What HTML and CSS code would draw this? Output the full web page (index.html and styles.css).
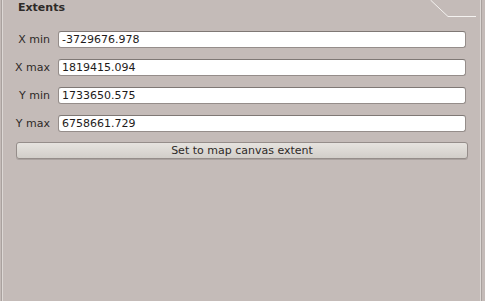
FILE: index.html
```html
<!DOCTYPE html>
<html lang="en">

<head>
    <meta charset="UTF-8">
    <title>Extents</title>
    <link rel="stylesheet" href="styles.css">
</head>

<body>
    <div id="panel">
        <svg class="tab-edge" width="485" height="20" viewBox="0 0 485 20">
            <path d="M430.5 0 L440 9 L448 16.5 L476 16.5" fill="none" stroke="#f4f2f0" stroke-width="1"/>
        </svg>
        <h2 class="group-title">Extents</h2>
        <div class="extent-grid">
            <label class="extent-label" for="xmin">X min</label>
            <input class="extent-input" type="text" id="xmin" value="-3729676.978">
            <label class="extent-label" for="xmax">X max</label>
            <input class="extent-input" type="text" id="xmax" value="1819415.094">
            <label class="extent-label" for="ymin">Y min</label>
            <input class="extent-input" type="text" id="ymin" value="1733650.575">
            <label class="extent-label" for="ymax">Y max</label>
            <input class="extent-input" type="text" id="ymax" value="6758661.729">
        </div>
        <button class="canvas-button" type="button">Set to map canvas extent</button>
    </div>
</body>

</html>
```

FILE: styles.css
```css
html,
body {
    height: 100%;
}

body {
    margin: 0;
    background-color: #c4bbb8;
    font-family: "DejaVu Sans", sans-serif;
    font-size: 11px;
    color: #2e2a28;
}

#panel {
    position: relative;
    box-sizing: border-box;
    height: 100%;
    margin: 0 4px 0 2px;
    padding: 0 13px 0 14px;
    border-left: 1px solid #ddd8d5;
    border-right: 1px solid #ddd8d5;
    box-shadow: -1px 0 0 #a9a19e, 1px 0 0 #a9a19e;
}

.tab-edge {
    position: absolute;
    top: 0;
    left: -3px;
}

.group-title {
    margin: 0;
    padding: 1px 0 0 1px;
    font-size: 11px;
    font-weight: bold;
    line-height: 13px;
}

.extent-grid {
    display: grid;
    grid-template-columns: 33px 1fr;
    column-gap: 8px;
    row-gap: 11px;
    margin: 17px 0 0 0;
}

.extent-label {
    justify-self: end;
    white-space: nowrap;
    line-height: 17px;
}

.extent-input {
    box-sizing: border-box;
    height: 17px;
    margin: 0 1px 0 0;
    padding: 0 3px;
    font-family: "DejaVu Sans", sans-serif;
    font-size: 11px;
    color: #1e1b1a;
    background-color: #ffffff;
    border: 1px solid #958d8a;
    border-top-color: #7f7875;
    border-radius: 3px;
}

.canvas-button {
    display: block;
    box-sizing: border-box;
    width: calc(100% + 2px);
    height: 17px;
    margin: 10px 0 0 -1px;
    padding: 0;
    font-family: "DejaVu Sans", sans-serif;
    font-size: 11px;
    color: #2e2a28;
    background: linear-gradient(#e6e3df, #d2cec9);
    border: 1px solid #958d8a;
    border-radius: 3px;
    box-shadow: 0 1px 0 #aaa29f;
}
```
